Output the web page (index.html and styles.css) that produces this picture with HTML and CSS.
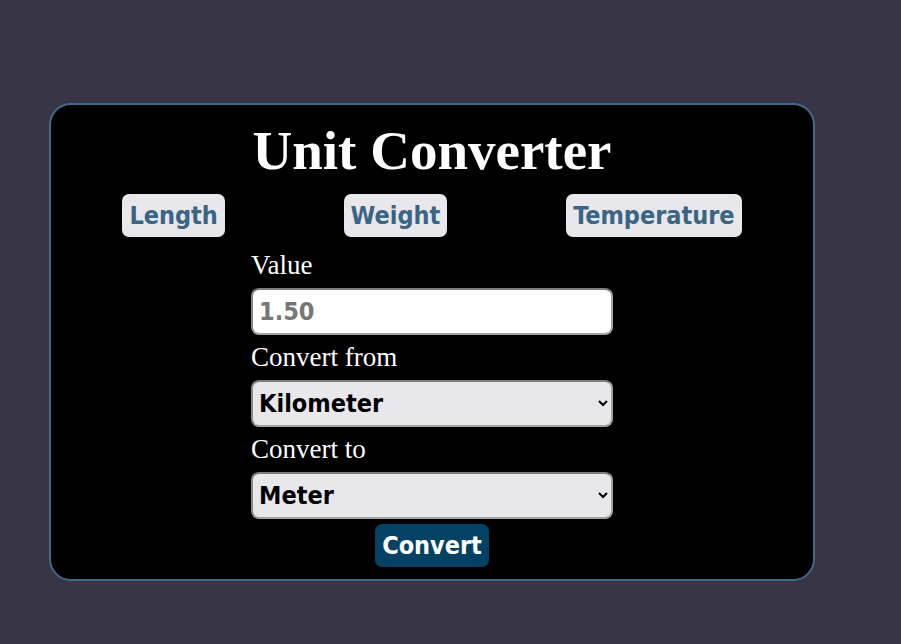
FILE: index.html
```html
<!DOCTYPE html>
<html lang="en">
<head>
<meta charset="utf-8">
<title>Unit Converter</title>
<link rel="stylesheet" href="styles.css">
</head>
<body>
<div class="card">
  <h1 class="title">Unit Converter</h1>
  <div class="tabs">
    <button class="tab">Length</button>
    <button class="tab">Weight</button>
    <button class="tab">Temperature</button>
  </div>
  <form class="form">
    <label class="label" for="value">Value</label>
    <input class="field input" id="value" type="text" placeholder="1.50">
    <label class="label" for="from">Convert from</label>
    <select class="field select" id="from">
      <option>Kilometer</option>
      <option>Meter</option>
    </select>
    <label class="label" for="to">Convert to</label>
    <select class="field select" id="to">
      <option>Meter</option>
      <option>Kilometer</option>
    </select>
    <button class="convert" type="button">Convert</button>
  </form>
</div>
</body>
</html>
```

FILE: styles.css
```css
html, body {
  margin: 0;
  padding: 0;
}
body {
  background: #373546;
  min-height: 644px;
  padding: 103px 0 0 49px;
  box-sizing: border-box;
  font-family: "Liberation Serif", serif;
}
.card {
  width: 766px;
  box-sizing: border-box;
  background: #000;
  border: 2px solid #41698a;
  border-radius: 22px;
  padding: 14px 0 12px;
  display: flex;
  flex-direction: column;
  align-items: center;
}
.title {
  margin: 0;
  color: #fff;
  font-family: "Liberation Serif", serif;
  font-weight: bold;
  font-size: 55px;
  line-height: 63px;
  text-align: center;
}
.tabs {
  align-self: stretch;
  display: flex;
  justify-content: space-around;
  padding: 0 12px;
  margin-top: 12px;
}
.tab {
  height: 43px;
  padding: 0 7px;
  border: none;
  border-radius: 7px;
  background: #e8e7ec;
  color: #3a6584;
  font-family: "DejaVu Sans Condensed", "DejaVu Sans", sans-serif;
  font-stretch: condensed;
  font-weight: bold;
  font-size: 25px;
  line-height: 43px;
}
.form {
  width: 362px;
  margin-top: 13px;
  display: flex;
  flex-direction: column;
}
.label {
  color: #fff;
  font-size: 27px;
  line-height: 31px;
  margin-bottom: 7px;
}
.field {
  height: 47px;
  box-sizing: border-box;
  margin: 0 0 7px;
  border: 2px solid #a3a3a3;
  border-top-color: #7d7d7d;
  border-left-color: #8a8a8a;
  border-radius: 8px;
  font-family: "DejaVu Sans Condensed", "DejaVu Sans", sans-serif;
  font-stretch: condensed;
  font-weight: bold;
  font-size: 25px;
  padding: 0 6px;
}
.input {
  background: #fff;
  color: #000;
}
.input::placeholder {
  color: #777;
  opacity: 1;
}
.select {
  background: #e8e7ec;
  color: #000;
  padding: 0 4px 0 2px;
}
.select:last-of-type {
  margin-bottom: 5px;
}
.convert {
  align-self: center;
  height: 43px;
  padding: 0 7px;
  border: none;
  border-radius: 7px;
  background: #034263;
  color: #fff;
  font-family: "DejaVu Sans Condensed", "DejaVu Sans", sans-serif;
  font-stretch: condensed;
  font-weight: bold;
  font-size: 25px;
  line-height: 43px;
}
```
